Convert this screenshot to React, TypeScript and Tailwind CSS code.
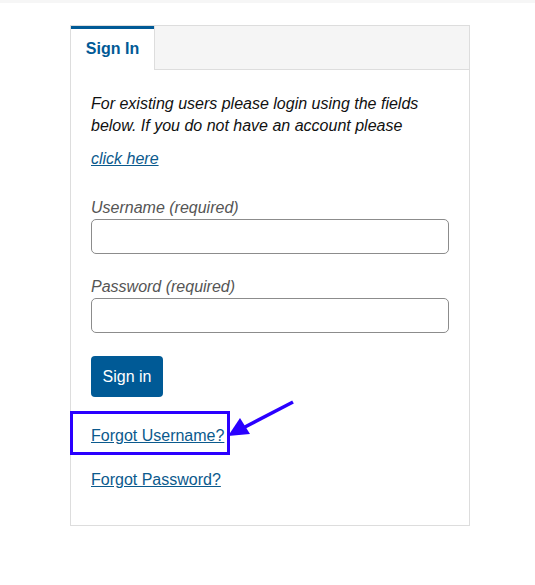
import React from "react";

export default function App() {
  return (
    <div className="w-[535px] h-[585px] bg-white relative" style={{ fontFamily: '"Liberation Sans", Arial, sans-serif' }}>
      <div className="h-[3px] bg-[#f6f6f6]" />
      <div className="ml-[70px] mt-[22px] w-[400px] border border-[#dddddd] relative">
        <div className="flex h-[44px]">
          <div className="w-[83px] border-t-[3px] border-[#005a96] bg-white flex items-center justify-center">
            <span className="text-[16px] font-bold text-[#005a96] leading-none -mt-[1px]">Sign In</span>
          </div>
          <div className="flex-1 bg-[#f5f5f5] border-l border-b border-[#dddddd]" />
        </div>
        <div className="px-[20px] pt-[23px] pb-[34px]">
          <p className="italic text-[16px] leading-[22px] text-[#111]">
            For existing users please login using the fields below. If you do not have an account please
          </p>
          <p className="mt-[11px] text-[16px] leading-[22px] italic">
            <a href="#" className="underline text-[#0b5a8d]">click here</a>
          </p>
          <label className="block mt-[27px] italic text-[16px] leading-[22px] text-[#555]">Username (required)</label>
          <input className="block w-[358px] h-[35px] border border-[#8c8c8c] rounded-[5px] bg-white" />
          <label className="block mt-[22px] italic text-[16px] leading-[22px] text-[#555]">Password (required)</label>
          <input type="password" className="block w-[358px] h-[35px] border border-[#8c8c8c] rounded-[5px] bg-white" />
          <button className="mt-[23px] h-[41px] w-[72px] bg-[#005a96] text-white text-[16px] rounded-[4px] flex items-center justify-center">
            Sign in
          </button>
          <div className="relative mt-[28px]">
            <div className="text-[16px] leading-[22px]">
              <a href="#" className="underline text-[#0b5a8d]">Forgot Username?</a>
            </div>
            <div className="absolute left-[-21px] top-[-14px] w-[160px] h-[44px] border-[3px] border-[#2a00ff] pointer-events-none" />
          </div>
          <div className="mt-[22px] text-[16px] leading-[22px]">
            <a href="#" className="underline text-[#0b5a8d]">Forgot Password?</a>
          </div>
        </div>
      </div>
      <svg className="absolute left-0 top-0 pointer-events-none" width="535" height="585">
        <line x1="293" y1="402" x2="243" y2="428" stroke="#2a00ff" strokeWidth="3.5" />
        <polygon points="228,436 240,418 250,434" fill="#2a00ff" />
      </svg>
    </div>
  );
}
